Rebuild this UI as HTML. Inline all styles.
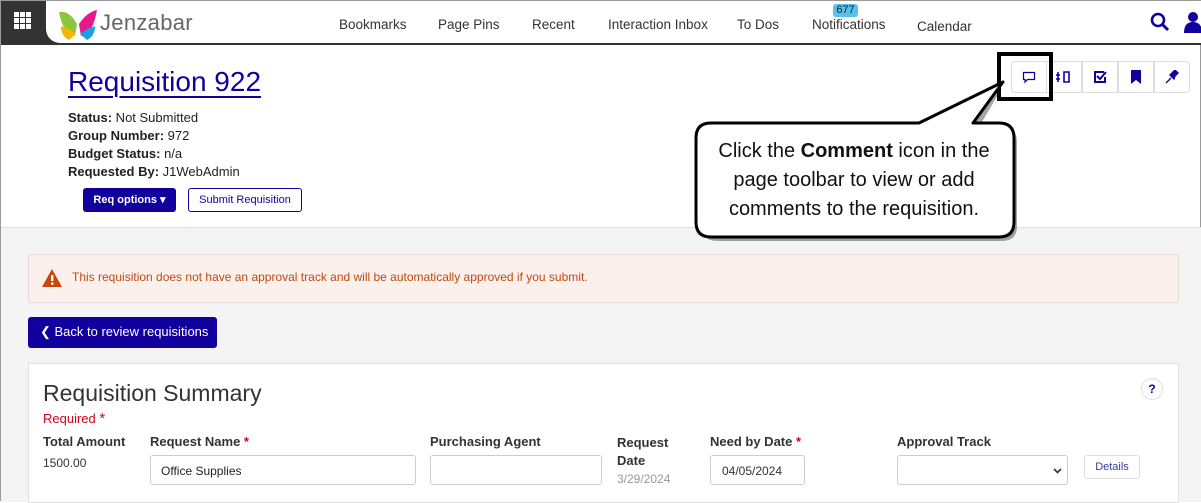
<!DOCTYPE html>
<html><head><style>
*{box-sizing:border-box;margin:0;padding:0}
body{width:1201px;height:501px;overflow:hidden;font-family:"Liberation Sans",Arial,sans-serif;background:#fff;position:relative;border:1px solid #9a9a9a}
.a{position:absolute}
.nav{left:0;top:0;width:1201px;height:44px;border-bottom:2px solid #333;background:#333}
.nav span{position:absolute;top:16px;font-size:13.5px;color:#333}
.lbl{font-size:13px;color:#222}
.lbl b{font-weight:bold}
.tb{top:60px;height:32px;width:36px;border:1px solid #ddd;display:flex;align-items:center;justify-content:center;background:#fff}
.fl{font-size:13px;font-weight:bold;color:#333}
.inp{border:1px solid #ccc;border-radius:3px;background:#fff;height:30px}
</style></head><body>
<div class="a nav">
 <div class="a" style="left:45px;top:0;width:1156px;height:42px;background:#fff;border-bottom-left-radius:14px"></div>
 <svg class="a" style="left:13px;top:11px" width="18" height="18"><g fill="#fff"><rect x="0" y="0" width="5" height="5"/><rect x="6" y="0" width="5" height="5"/><rect x="12" y="0" width="5" height="5"/><rect x="0" y="6" width="5" height="5"/><rect x="6" y="6" width="5" height="5"/><rect x="12" y="6" width="5" height="5"/><rect x="0" y="12" width="5" height="5"/><rect x="6" y="12" width="5" height="5"/><rect x="12" y="12" width="5" height="5"/></g></svg>
 <svg class="a" style="left:56px;top:7px" width="42" height="32"><path d="M2 4 Q12 2 20 16 L18 28 Q6 26 2 4Z" fill="#8cc63f"/><path d="M40 2 Q30 4 22 16 L24 28 Q36 26 40 2Z" fill="#e6198a"/><path d="M4 18 Q12 20 19 26 L12 32 Q4 28 4 18Z" fill="#f7b500"/><path d="M38 18 Q30 20 23 26 L30 32 Q38 28 38 18Z" fill="#1ba1e2"/></svg>
 <div class="a" style="left:99px;top:9px;font-size:22px;color:#666;letter-spacing:0.3px">Jenzabar</div>
 <span style="left:338px">Bookmarks</span>
 <span style="left:437px">Page Pins</span>
 <span style="left:531px">Recent</span>
 <span style="left:607px">Interaction Inbox</span>
 <span style="left:736px">To Dos</span>
 <span style="left:811px">Notifications</span>
 <div class="a" style="left:832px;top:3px;width:25px;height:13px;background:#5bc0ee;border-radius:3px;font-size:11px;color:#123;text-align:center;line-height:13px">677</div>
 <span style="left:916px;top:18px">Calendar</span>
 <svg class="a" style="left:1149px;top:11px" width="20" height="20"><circle cx="8" cy="8" r="6" fill="none" stroke="#12009e" stroke-width="2.6"/><path d="M12.5 12.5 L18 18" stroke="#12009e" stroke-width="3"/></svg>
 <svg class="a" style="left:1183px;top:10px" width="18" height="22"><circle cx="9" cy="6" r="5" fill="#12009e"/><path d="M0 22 Q0 11 9 11 Q18 11 18 22Z" fill="#12009e"/></svg>
</div>
<div class="a" style="left:67px;top:65px;font-size:28px;color:#12009e;text-decoration:underline;text-decoration-thickness:2px;text-underline-offset:5px">Requisition 922</div>
<div class="a lbl" style="left:67px;top:108px;line-height:18px"><b>Status:</b> Not Submitted<br><b>Group Number:</b> 972<br><b>Budget Status:</b> n/a<br><b>Requested By:</b> J1WebAdmin</div>
<div class="a" style="left:82px;top:187px;width:93px;height:24px;background:#12009e;border-radius:3px;color:#fff;font-size:11px;font-weight:bold;text-align:center;line-height:24px">Req options ▾</div>
<div class="a" style="left:187px;top:187px;width:114px;height:24px;border:1px solid #12009e;border-radius:3px;color:#12009e;font-size:11px;text-align:center;line-height:22px">Submit Requisition</div>
<div class="a tb" style="left:1010px;border-radius:4px 0 0 4px"><svg width="14" height="13"><path d="M1.5 1.5h11v7h-7l-2.5 2.5v-2.5h-1.5z" fill="none" stroke="#12009e" stroke-width="1.2"/></svg></div>
<div class="a tb" style="left:1045px"><svg width="18" height="14"><path d="M3 2v10M1 5h4M1 9h4M9 2h5v10h-5z" fill="none" stroke="#12009e" stroke-width="1.6"/></svg></div>
<div class="a tb" style="left:1081px"><svg width="14" height="14"><path d="M11 2H2v10h10V7" fill="none" stroke="#12009e" stroke-width="2"/><path d="M4 6l3 3 6-7" fill="none" stroke="#12009e" stroke-width="2"/></svg></div>
<div class="a tb" style="left:1117px"><svg width="12" height="14"><path d="M1 0h10v14l-5-4-5 4z" fill="#12009e"/></svg></div>
<div class="a tb" style="left:1153px;border-radius:0 4px 4px 0"><svg width="14" height="14"><path d="M1 13l5-5M5 5l4 4 1-3 3-3-3-3-3 3z" fill="#12009e" stroke="#12009e" stroke-width="1.4"/></svg></div>
<div class="a" style="left:0;top:226px;width:1201px;height:275px;background:#f4f4f4;border-top:1px solid #e0e0e0"></div>
<div class="a" style="left:27px;top:253px;width:1151px;height:49px;background:#fbf0ec;border:1px solid #e5d9d4;border-radius:3px"></div>
<svg class="a" style="left:40px;top:267px" width="22" height="20"><path d="M11 1L21 19H1z" fill="#c9470e"/><rect x="10" y="7" width="2.4" height="6" fill="#fff"/><rect x="10" y="14.5" width="2.4" height="2.4" fill="#fff"/></svg>
<div class="a" style="left:71px;top:269px;font-size:12px;color:#c04a10">This requisition does not have an approval track and will be automatically approved if you submit.</div>
<div class="a" style="left:27px;top:316px;width:189px;height:31px;background:#12009e;border-radius:3px;color:#fff;font-size:13px;line-height:30px;padding-left:12px">❮ Back to review requisitions</div>
<div class="a" style="left:27px;top:362px;width:1151px;height:140px;background:#fff;border:1px solid #e0e0e0"></div>
<div class="a" style="left:42px;top:379px;font-size:23px;color:#333">Requisition Summary</div>
<div class="a" style="left:42px;top:409px;font-size:13px;color:#d0021b">Required <span style="font-size:15px">*</span></div>
<div class="a fl" style="left:42px;top:433px">Total Amount</div>
<div class="a" style="left:42px;top:455px;font-size:12px;color:#333">1500.00</div>
<div class="a fl" style="left:149px;top:433px">Request Name <span style="color:#d0021b">*</span></div>
<div class="a inp" style="left:149px;top:454px;width:266px;font-size:12px;padding:8px 10px;color:#222">Office Supplies</div>
<div class="a fl" style="left:429px;top:433px">Purchasing Agent</div>
<div class="a inp" style="left:429px;top:454px;width:172px"></div>
<div class="a fl" style="left:616px;top:433px;line-height:18px">Request<br>Date</div>
<div class="a" style="left:616px;top:471px;font-size:12px;color:#999">3/29/2024</div>
<div class="a fl" style="left:709px;top:433px">Need by Date <span style="color:#d0021b">*</span></div>
<div class="a inp" style="left:709px;top:454px;width:95px;font-size:12px;padding:8px 11px;color:#333">04/05/2024</div>
<div class="a fl" style="left:896px;top:433px">Approval Track</div>
<div class="a inp" style="left:896px;top:454px;width:171px"><svg class="a" style="left:155px;top:12px" width="9" height="6"><path d="M1 1l3.5 3.5L8 1" fill="none" stroke="#333" stroke-width="1.6"/></svg></div>
<div class="a" style="left:1083px;top:454px;width:56px;height:24px;border:1px solid #ddd;border-radius:3px;font-size:11px;color:#3a3aa0;text-align:center;line-height:22px">Details</div>
<div class="a" style="left:1140px;top:377px;width:22px;height:22px;border:1px solid #ddd;border-radius:50%;font-size:12px;font-weight:bold;color:#12009e;text-align:center;line-height:20px">?</div>
<div class="a" style="left:996px;top:51px;width:56px;height:49px;border:4px solid #000"></div>
<svg class="a" style="left:680px;top:75px" width="350" height="175">
 <path d="M37 47 L238 47 L318 8 L295 47 L318 47 Q333 47 333 62 L333 146 Q333 161 318 161 L33 161 Q18 161 18 146 L18 62 Q18 47 33 47Z" fill="#000" opacity="0.35" transform="translate(3,4)"/>
 <path d="M30 47 L238 47 L322 6 L292 47 L318 47 Q333 47 333 62 L333 146 Q333 161 318 161 L30 161 Q15 161 15 146 L15 62 Q15 47 30 47Z" fill="#fff" stroke="#000" stroke-width="3" stroke-linejoin="round"/>
</svg>
<div class="a" style="left:697px;top:136px;width:312px;text-align:center;font-family:'Liberation Sans',sans-serif;font-size:20px;line-height:29px;color:#111">Click the <b>Comment</b> icon in the page toolbar to view or add comments to the requisition.</div>
</body></html>
